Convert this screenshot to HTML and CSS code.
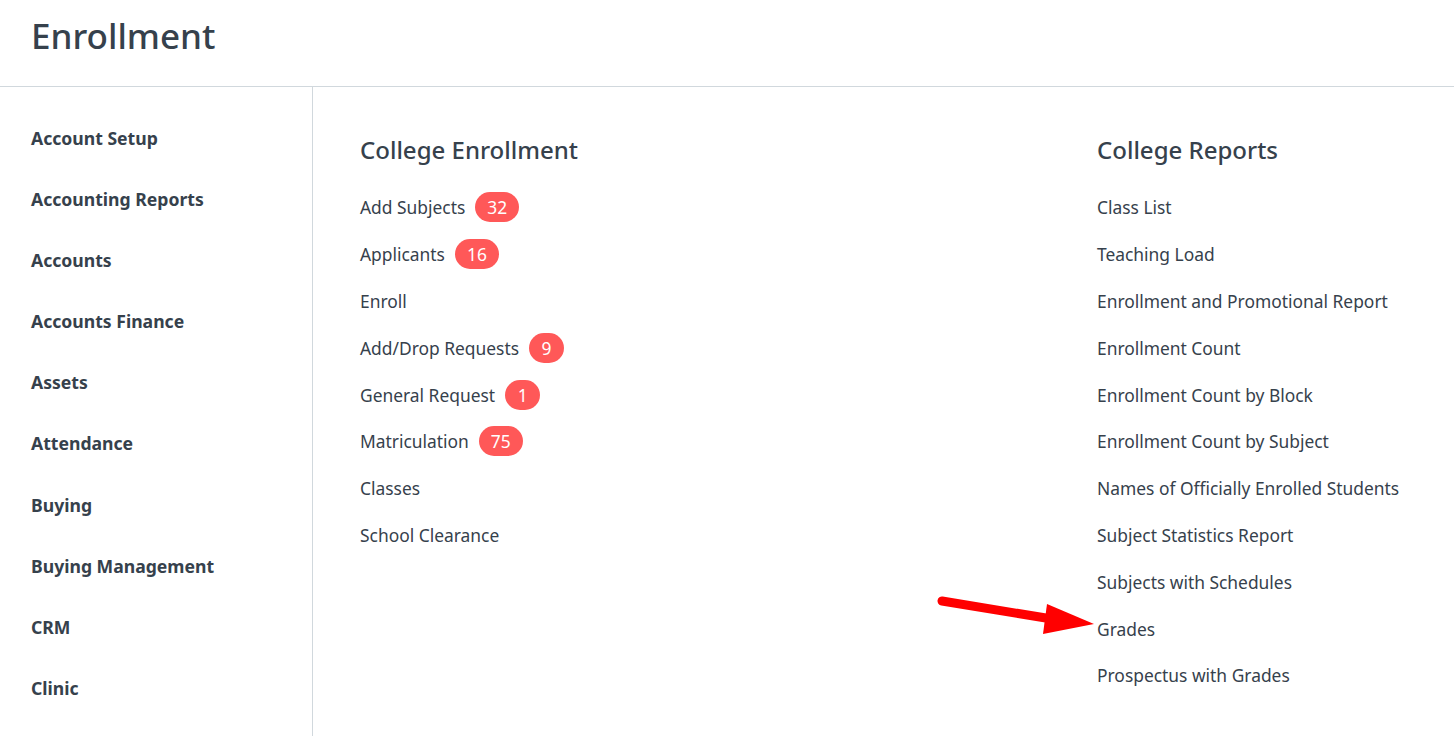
FILE: index.html
```html
<!DOCTYPE html>
<html>
<head>
<meta charset="utf-8">
<link rel="stylesheet" href="styles.css">
</head>
<body>
<header class="page-head">
  <h1 class="page-title">Enrollment</h1>
</header>
<div class="layout">
  <aside class="sidebar">
    <a class="side-item">Account Setup</a>
    <a class="side-item">Accounting Reports</a>
    <a class="side-item">Accounts</a>
    <a class="side-item">Accounts Finance</a>
    <a class="side-item">Assets</a>
    <a class="side-item">Attendance</a>
    <a class="side-item">Buying</a>
    <a class="side-item">Buying Management</a>
    <a class="side-item">CRM</a>
    <a class="side-item">Clinic</a>
  </aside>
  <main class="content">
    <section class="card">
      <h2 class="card-title">College Enrollment</h2>
      <a class="link">Add Subjects <span class="badge">32</span></a>
      <a class="link">Applicants <span class="badge">16</span></a>
      <a class="link">Enroll</a>
      <a class="link">Add/Drop Requests <span class="badge">9</span></a>
      <a class="link">General Request <span class="badge">1</span></a>
      <a class="link">Matriculation <span class="badge">75</span></a>
      <a class="link">Classes</a>
      <a class="link">School Clearance</a>
    </section>
    <section class="card">
      <h2 class="card-title">College Reports</h2>
      <a class="link">Class List</a>
      <a class="link">Teaching Load</a>
      <a class="link">Enrollment and Promotional Report</a>
      <a class="link">Enrollment Count</a>
      <a class="link">Enrollment Count by Block</a>
      <a class="link">Enrollment Count by Subject</a>
      <a class="link">Names of Officially Enrolled Students</a>
      <a class="link">Subject Statistics Report</a>
      <a class="link">Subjects with Schedules</a>
      <a class="link">Grades</a>
      <a class="link">Prospectus with Grades</a>
    </section>
  </main>
</div>
<svg class="arrow" width="1454" height="736" viewBox="0 0 1454 736">
  <line x1="942" y1="601" x2="1052" y2="619" stroke="#ff0000" stroke-width="9" stroke-linecap="round"/>
  <polygon points="1047,604 1094,624 1043,634" fill="#ff0000"/>
</svg>
</body>
</html>
```
FILE: styles.css
```css
html, body {
  margin: 0;
  padding: 0;
  background: #ffffff;
}
body {
  font-family: "Noto Sans", "Open Sans", "Liberation Sans", sans-serif;
  color: #36414c;
  position: relative;
  width: 1454px;
  height: 736px;
  overflow: hidden;
}
.page-head {
  height: 87px;
  border-bottom: 1px solid #d1d8dd;
  box-sizing: border-box;
  display: flex;
  align-items: center;
  padding-left: 31px;
}
.page-title {
  margin: 0;
  font-size: 35px;
  font-weight: 500;
  line-height: 1;
  margin-top: -15px;
}
.layout {
  display: flex;
  height: 649px;
}
.sidebar {
  display: flex;
  flex-direction: column;
  padding-top: 36px;
  padding-left: 31px;
  box-sizing: border-box;
  width: 313px;
  border-right: 1px solid #d1d8dd;
}
.side-item {
  font-weight: 700;
  font-size: 17.6px;
  height: 61.1px;
  line-height: 30px;
}
.content {
  flex: 1;
  display: grid;
  grid-template-columns: 737px 1fr;
  padding-left: 47px;
  padding-top: 46px;
}
.card {
  display: flex;
  flex-direction: column;
}
.card-title {
  margin: 0 0 17px 0;
  font-size: 24px;
  font-weight: 500;
  line-height: 34px;
}
.link {
  font-size: 17.4px;
  height: 46.8px;
  line-height: 30px;
  display: flex;
  align-items: center;
  align-self: flex-start;
}
.badge {
  display: inline-block;
  background: #ff5858;
  color: #ffffff;
  border-radius: 15px;
  height: 30px;
  line-height: 30px;
  min-width: 35px;
  padding: 0 12px;
  box-sizing: border-box;
  text-align: center;
  margin-left: 10px;
  font-size: 17.4px;
}
.arrow {
  position: absolute;
  left: 0;
  top: 0;
  pointer-events: none;
}
```
